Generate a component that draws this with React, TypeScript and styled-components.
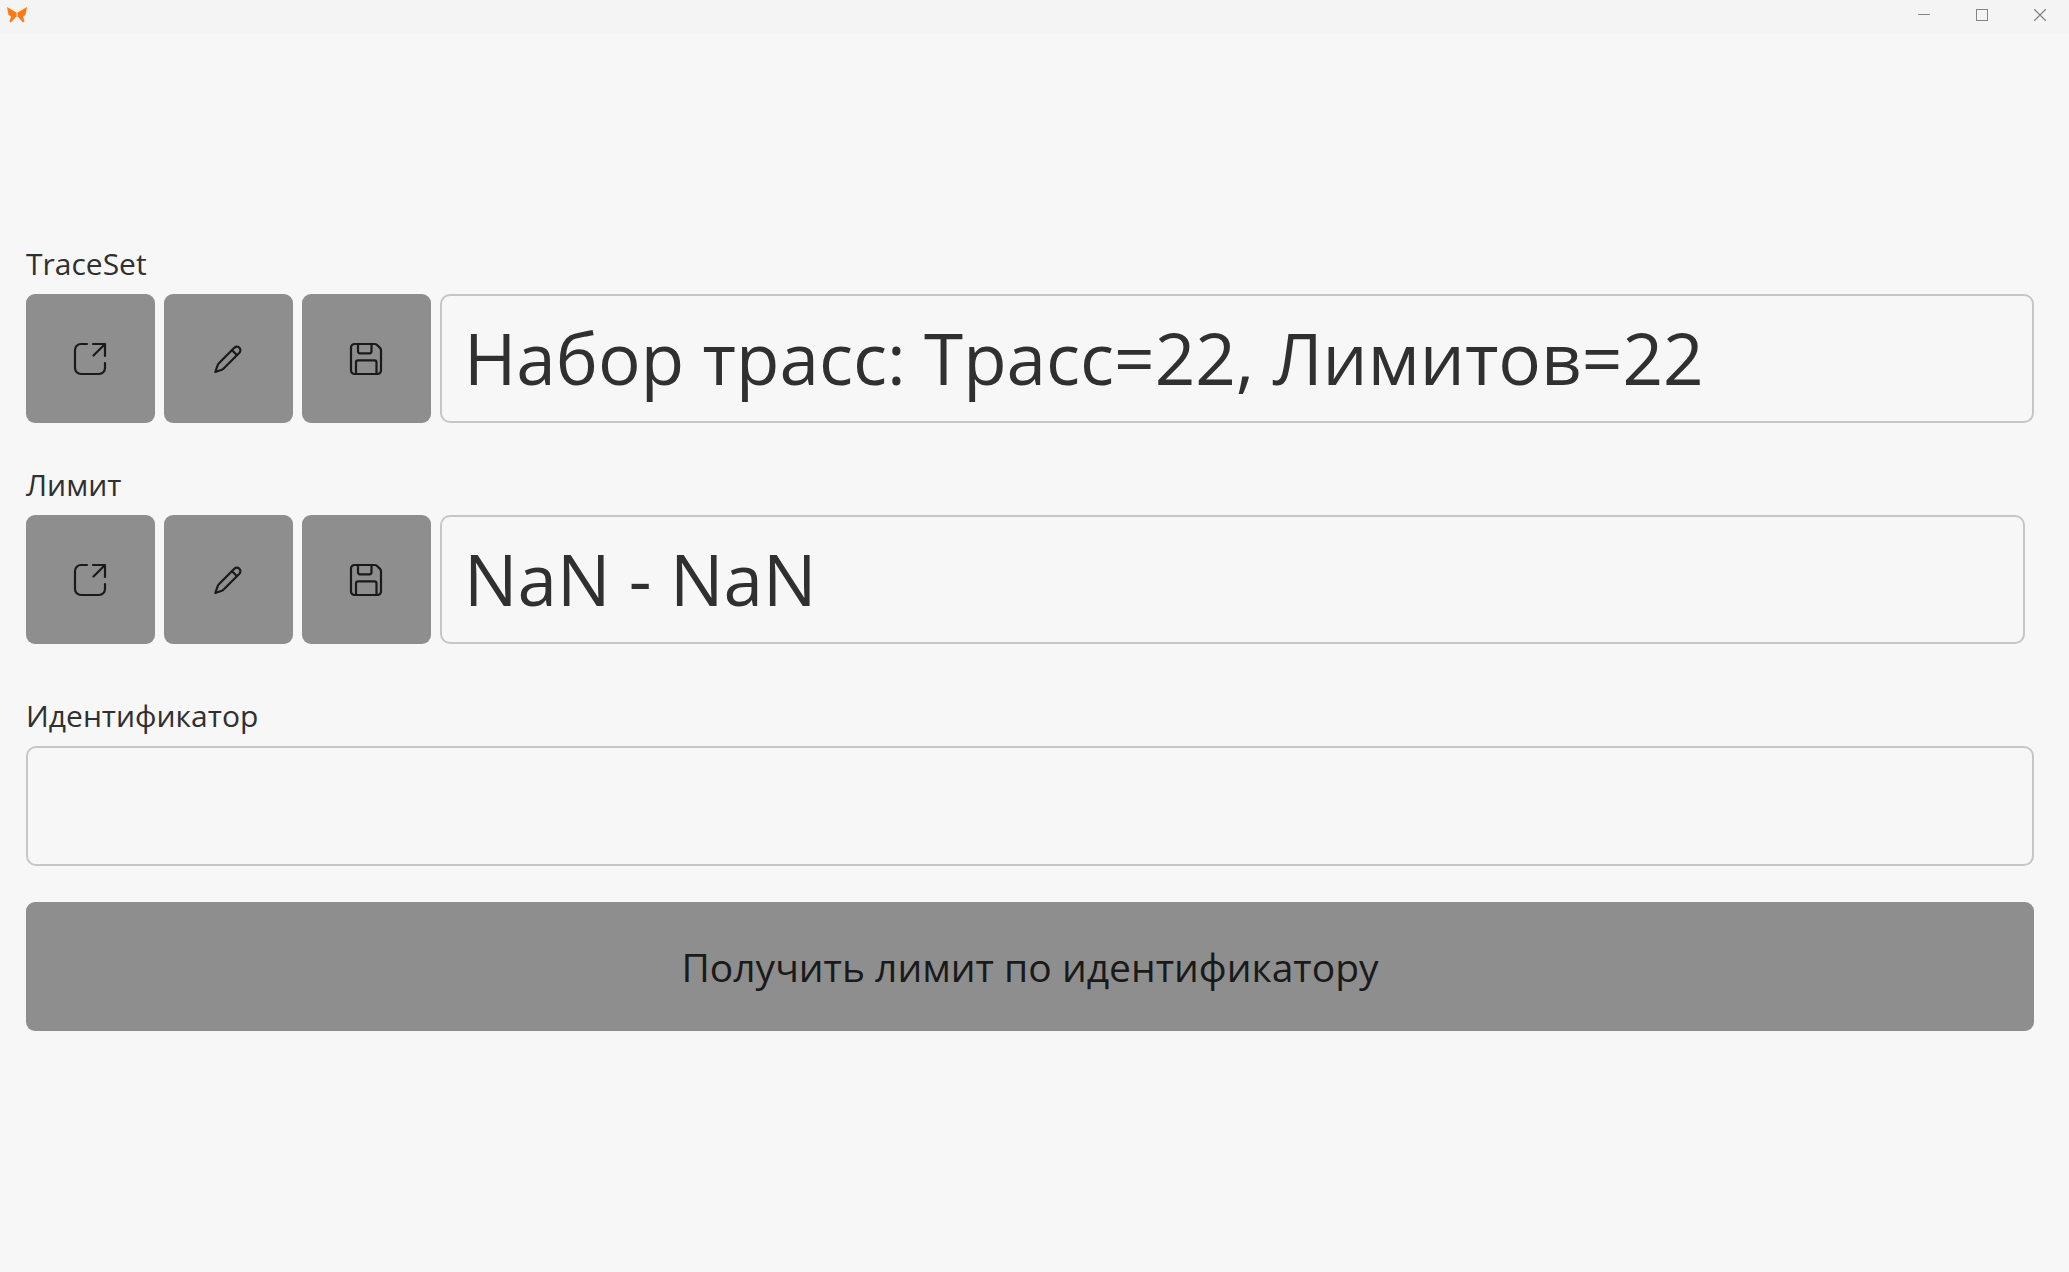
import React from "react";
import styled, { createGlobalStyle } from "styled-components";

const GlobalStyle = createGlobalStyle`
  *, *::before, *::after { box-sizing: border-box; }
  body {
    margin: 0;
    background: #f7f7f7;
    color: #303030;
    font-family: "Open Sans", "Noto Sans", sans-serif;
  }
  button, input { font: inherit; color: inherit; }
`;

const Window = styled.div`
  display: flex;
  flex-direction: column;
  min-height: 100vh;
`;

const TitleBar = styled.header`
  display: flex;
  align-items: center;
  justify-content: space-between;
  height: 34px;
  padding: 0 0 4px 7px;
  background: #f4f4f4;
`;

const WindowControls = styled.div`
  display: flex;
`;

const WindowButton = styled.button`
  display: flex;
  align-items: center;
  justify-content: center;
  width: 58px;
  height: 30px;
  padding: 0;
  border: 0;
  background: transparent;
  color: #858585;
`;

const Form = styled.form`
  display: flex;
  flex-direction: column;
  padding: 210px 35px 40px 26px;
`;

const Section = styled.section<{ $space: number }>`
  display: flex;
  flex-direction: column;
  gap: 10px;
  margin-bottom: ${(p) => p.$space}px;
`;

const Label = styled.label`
  font-size: 30px;
  line-height: 40px;
`;

const Row = styled.div<{ $inset?: boolean }>`
  display: flex;
  gap: 9px;
  padding-right: ${(p) => (p.$inset ? 9 : 0)}px;
`;

const IconButton = styled.button`
  display: flex;
  flex: none;
  align-items: center;
  justify-content: center;
  width: 129px;
  height: 129px;
  padding: 0;
  border: 0;
  border-radius: 9px;
  background: #8e8e8e;
  color: #1a1a1a;
`;

const Field = styled.input<{ $height: number }>`
  flex: 1 1 auto;
  min-width: 0;
  width: 100%;
  height: ${(p) => p.$height}px;
  padding: 0 22px 2px;
  border: 2px solid #c6c6c6;
  border-radius: 10px;
  background: transparent;
  font-size: 71px;
  outline: none;
`;

const SubmitButton = styled.button`
  height: 129px;
  border: 0;
  border-radius: 9px;
  background: #8e8e8e;
  color: #1a1a1a;
  font-size: 39px;
`;

const Glyph = ({ children }: { children: React.ReactNode }) => (
  <svg width="39" height="39" viewBox="1 0 39 39" fill="none" stroke="currentColor"
    strokeWidth="2.2" strokeLinecap="round" strokeLinejoin="round" aria-hidden="true">
    {children}
  </svg>
);

const OpenIcon = () => (
  <Glyph>
    <path d="M17 5h-6a6 6 0 0 0-6 6v18a6 6 0 0 0 6 6h18a6 6 0 0 0 6-6v-5" />
    <path d="M23 5h12v12M35 5 23.500 16.500" />
  </Glyph>
);

const EditIcon = () => (
  <Glyph>
    <path d="M7.300 33 9.600 26.400q.4-1.200 1.300-2.100L26.300 8.700a3.700 3.700 0 0 1 5.100 0a3.700 3.700 0 0 1 0 5.100L15.900 29.300q-.9.900-2.100 1.500Z" />
    <path d="M24 11.300 28.800 16" />
  </Glyph>
);

const SaveIcon = () => (
  <Glyph>
    <path d="M8.500 5h20.200q1.400 0 2.400 1l2.900 2.900q1 1 1 2.400v20.200a3.500 3.500 0 0 1-3.500 3.500h-23a3.500 3.500 0 0 1-3.500-3.500v-23A3.500 3.500 0 0 1 8.500 5Z" />
    <path d="M12 5v7.300a2 2 0 0 0 2 2h9.500a2 2 0 0 0 2-2V5M10 35V23.300a2 2 0 0 1 2-2h16.500a2 2 0 0 1 2 2V35" />
  </Glyph>
);

const Butterfly = () => (
  <svg width="20" height="16" viewBox="0 0 20 16" fill="#ff7a14" aria-hidden="true">
    <path d="M0 0 9.300 5.500V9.500L4 15.500 2.500 14.500 4 9.500 1.500 8Z" />
    <path d="M20 0 10.700 5.500V9.500L16 15.500 17.500 14.500 16 9.500 18.500 8Z" />
    <path d="M9 5.500h2v4.500H9Z" fill="#ffb070" />
  </svg>
);

const ObjectRow = ({ id, label, value, inset, space }: {
  id: string; label: string; value: string; inset?: boolean; space: number;
}) => (
  <Section $space={space}>
    <Label htmlFor={id}>{label}</Label>
    <Row $inset={inset}>
      <IconButton type="button" aria-label="Открыть"><OpenIcon /></IconButton>
      <IconButton type="button" aria-label="Изменить"><EditIcon /></IconButton>
      <IconButton type="button" aria-label="Сохранить"><SaveIcon /></IconButton>
      <Field id={id} $height={129} value={value} readOnly />
    </Row>
  </Section>
);

export default function App() {
  return (
    <>
      <GlobalStyle />
      <Window>
        <TitleBar>
          <Butterfly />
          <WindowControls>
            <WindowButton aria-label="Свернуть">
              <svg width="12" height="12" stroke="currentColor"><path d="M0 5.500h12" /></svg>
            </WindowButton>
            <WindowButton aria-label="Развернуть">
              <svg width="12" height="12" fill="none" stroke="currentColor"><rect x=".5" y=".5" width="11" height="11" /></svg>
            </WindowButton>
            <WindowButton aria-label="Закрыть">
              <svg width="12" height="12" stroke="currentColor" strokeWidth="1.300"><path d="m0 0 12 12M12 0 0 12" /></svg>
            </WindowButton>
          </WindowControls>
        </TitleBar>
        <Form onSubmit={(e) => e.preventDefault()}>
          <ObjectRow id="trace-set" label="TraceSet" value="Набор трасс: Трасс=22, Лимитов=22" space={42} />
          <ObjectRow id="limit" label="Лимит" value="NaN - NaN" inset space={52} />
          <Section $space={36}>
            <Label htmlFor="identifier">Идентификатор</Label>
            <Field id="identifier" $height={120} />
          </Section>
          <SubmitButton type="submit">Получить лимит по идентификатору</SubmitButton>
        </Form>
      </Window>
    </>
  );
}
